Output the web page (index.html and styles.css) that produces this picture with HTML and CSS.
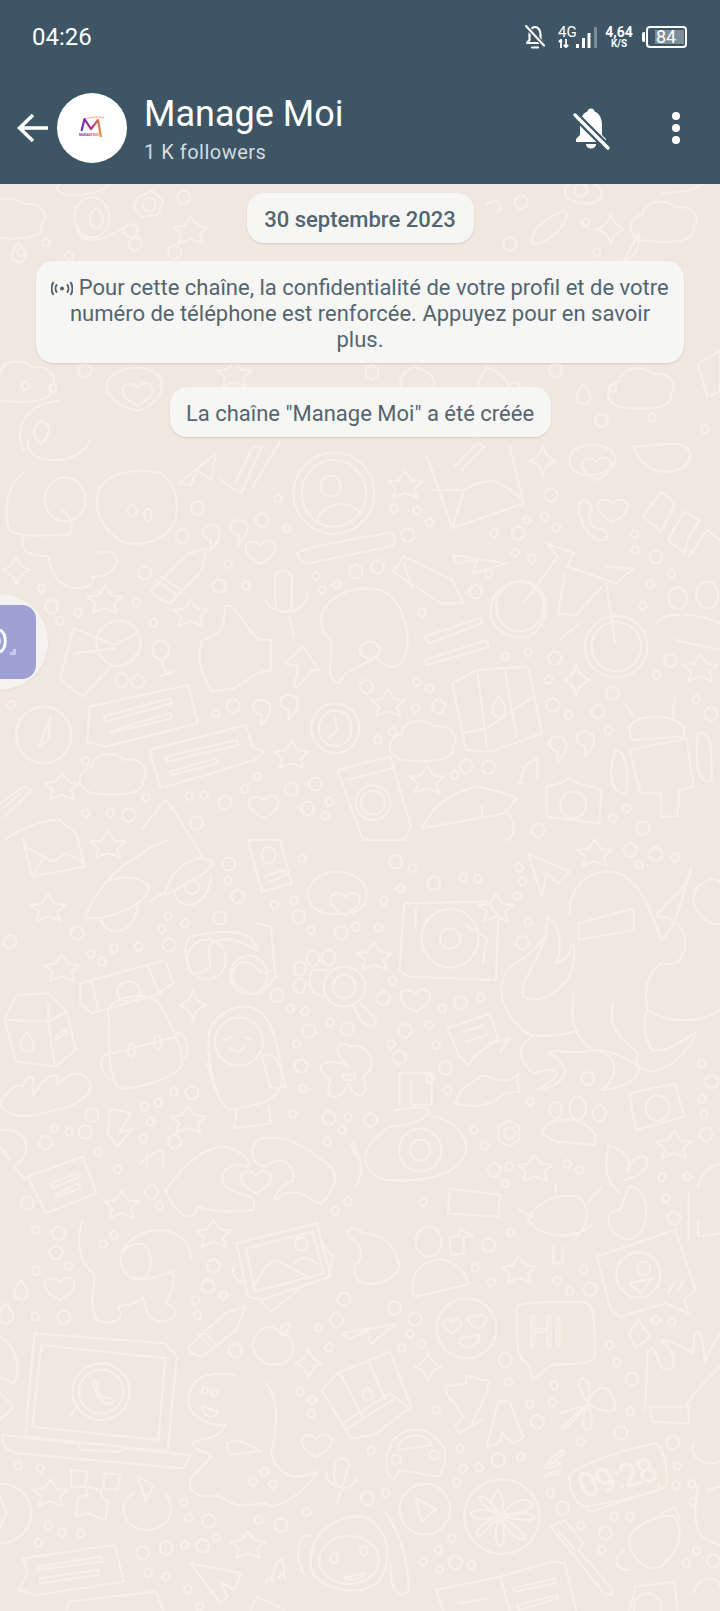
FILE: index.html
```html
<!DOCTYPE html>
<html lang="fr">

<head>
    <meta charset="UTF-8">
    <meta name="viewport" content="width=device-width, initial-scale=1.0">
    <link rel="stylesheet" href="styles.css">
    <title>Manage Moi</title>
</head>

<body>
    <div class="screen">
        <header class="top">
            <div class="status-bar">
                <span class="clock">04:26</span>
                <div class="status-icons">
                    <svg class="status-bell" viewBox="0 0 20 24" width="20" height="24">
                        <path d="M2 18 4.500 15V9.500C4.500 5 7 2 10 2S15.500 5 15.500 9.500V15L18 18Z" fill="none" stroke="#fff" stroke-width="2.200" stroke-linejoin="round"/>
                        <path d="M7 22.500H13" stroke="#fff" stroke-width="2.200" stroke-linecap="round"/>
                        <path d="M1 1 19 20.500" stroke="#3d5564" stroke-width="4.500"/>
                        <path d="M1 1 19 20.500" stroke="#fff" stroke-width="2.200" stroke-linecap="round"/>
                    </svg>
                    <div class="network">
                        <div class="net-type">
                            <span class="net-label">4G</span>
                            <svg viewBox="0 0 11 9" width="11" height="9">
                                <path d="M3 9V1M.800 3 3 .800 3.800 3M8 0V8M5.800 6 8 8.200 10.200 6" fill="none" stroke="#fff" stroke-width="1.800"/>
                            </svg>
                        </div>
                        <svg class="signal" viewBox="0 0 21 21" width="21" height="21">
                            <rect x="0" y="17" width="3" height="4" fill="#fff"/>
                            <rect x="6" y="11" width="3" height="10" fill="#fff"/>
                            <rect x="11.500" y="6" width="3" height="15" fill="#fff"/>
                            <rect x="18" y="0" width="3" height="21" fill="#7d8e99"/>
                        </svg>
                    </div>
                    <div class="speed">
                        <span class="speed-value">4,64</span>
                        <span class="speed-unit">K/S</span>
                    </div>
                    <div class="battery">
                        <span class="battery-nub"></span>
                        <div class="battery-box">
                            <span class="battery-level">84</span>
                        </div>
                    </div>
                </div>
            </div>
            <div class="app-bar">
                <svg class="back" viewBox="0 0 32 32" width="32" height="32">
                    <path d="M31 16H3M16 3 2.500 16 16 29" fill="none" stroke="#fff" stroke-width="3.600"/>
                </svg>
                <div class="avatar">
                    <svg viewBox="0 0 26 24" width="26" height="24">
                        <defs>
                            <linearGradient id="logo" x1="0" x2="1" y1="0" y2="0">
                                <stop offset="0" stop-color="#6a2bb8"/>
                                <stop offset=".45" stop-color="#a52a8f"/>
                                <stop offset="1" stop-color="#ef8a3c"/>
                            </linearGradient>
                        </defs>
                        <path d="M2.500 15 5.500 3 12 13 19 4 22 21" fill="none" stroke="url(#logo)" stroke-width="2.200" stroke-linejoin="round"/>
                        <path d="M7 3C13 1 20 0 25 2" fill="none" stroke="#ef8a3c" stroke-width=".7"/>
                        <text class="logo-text" x="0" y="20" fill="url(#logo)">MANAGE MOI</text>
                    </svg>
                </div>
                <div class="channel">
                    <h1 class="channel-name">Manage Moi</h1>
                    <span class="channel-count">1 K followers</span>
                </div>
                <svg class="muted" viewBox="0 0 40 44" width="40" height="44">
                    <circle cx="19" cy="4" r="3.500" fill="#fff"/>
                    <path d="M19 3C11 3 8 10 8 17V27L4 31V34H34V31L30 27V17C30 10 27 3 19 3Z" fill="#fff"/>
                    <path d="M14 36H24C24 42 14 42 14 36Z" fill="#fff"/>
                    <path d="M2 6 36 40" stroke="#3d5564" stroke-width="8"/>
                    <path d="M3 7 36 40" stroke="#fff" stroke-width="3.400" stroke-linecap="round"/>
                </svg>
                <div class="more">
                    <span class="dot"></span>
                    <span class="dot"></span>
                    <span class="dot"></span>
                </div>
            </div>
        </header>

        <main class="chat">
            <svg class="wallpaper" viewBox="0 184 720 1427" width="720" height="1427">
                <defs>
                    <ellipse id="o" rx="14" ry="20"/>
                    <ellipse id="s" rx="8" ry="12"/>
                    <path id="star" d="M0-42 14-14 38-10 20 10 26 38 0 24-26 38-20 10-38-10-14-14Z"/>
                    <path id="spark" d="M0-45Q5-10 30 0 5 10 0 45-5 10-30 0-5-10 0-45Z"/>
                    <path id="heart" d="M0 36C-50 0-35-40-8-28L0-18C10-45 40-30 30 0 25 15 10 28 0 36Z"/>
                    <path id="drop" d="M0-30C15-5 25 20 5 30-20 30-18 0 0-30Z"/>
                    <path id="cloud" d="M-50 60C-90 40-80-10-50-20-50-60 0-70 20-40 60-50 80 0 60 20 70 60 20 70-50 60Z"/>
                    <path id="plane" d="M-40 40 40-50 30 30 0 0-15 45Z"/>
                    <path id="quote" d="M-20-30C-45-30-45 10-20 15L-22 45C0 20 10-25-20-30ZM40-45C15-45 15-5 40 0L38 30C60 5 70-40 40-45Z"/>
                    <path id="phone" d="M-20-60C-40-50-30 20 10 60L30 60C40 40 20 20 5 25-10 0-10-20 0-30-5-50-10-60-20-60Z"/>
                </defs>

                <!-- top strip, behind the notices -->
                <g class="doodles" transform="translate(0 184) scale(.4592 .3333)">
                    <use href="#cloud" x="30" y="100"/>
                    <ellipse cx="200" cy="100" rx="38" ry="60"/>
                    <ellipse cx="210" cy="105" rx="14" ry="28"/>
                    <path d="M170 125C160 170 210 190 270 130M130 0C100 40 200 50 240 0"/>
                    <path d="M300 40 330 20 355 50 345 90 310 100 292 70Z"/>
                    <ellipse cx="325" cy="62" rx="15" ry="20"/>
                    <use href="#star" x="415" y="140"/>
                    <use href="#o" x="400" y="40"/>
                    <use href="#o" x="285" y="140"/>
                    <use href="#o" x="295" y="180"/>
                    <use href="#o" x="380" y="205"/>
                    <use href="#s" x="100" y="175"/>
                    <use href="#s" x="45" y="205"/>
                    <use href="#s" x="150" y="215"/>
                    <use href="#o" x="1135" y="55"/>
                    <path d="M1060 60C1080 40 1100 60 1085 85M1230 20C1230-20 1310-20 1310 30 1310 70 1230 70 1230 20Z"/>
                    <ellipse cx="1265" cy="18" rx="14" ry="20"/>
                    <path d="M1160 180C1150 140 1190 100 1230 80 1250 100 1200 180 1160 180Z"/>
                    <use href="#spark" x="1330" y="135"/>
                    <use href="#cloud" x="1450" y="110"/>
                    <path d="M1360 230C1375 180 1390 160 1390 150 1395 190 1380 225 1360 230ZM1440 30 1500 20 1530 0"/>
                    <use href="#o" x="1110" y="180"/>
                    <use href="#s" x="1275" y="115"/>
                    <use href="#s" x="1300" y="205"/>
                    <use href="#drop" x="40" y="205"/>
                    <use href="#cloud" x="50" y="590"/>
                    <use href="#o" x="185" y="560"/>
                    <use href="#s" x="55" y="605"/>
                    <use href="#s" x="115" y="612"/>
                    <path d="M300 550C200 560 220 660 300 680 360 660 380 560 300 550Z"/>
                    <use href="#heart" x="300" y="630"/>
                    <use href="#star" x="510" y="570"/>
                    <path d="M900 550C860 570 860 640 910 650 960 640 960 560 900 550ZM1060 550C1030 600 1030 680 1080 700 1120 680 1130 580 1060 550Z"/>
                    <use href="#o" x="810" y="565"/>
                    <use href="#o" x="1210" y="560"/>
                    <use href="#drop" x="1270" y="630"/>
                    <use href="#cloud" x="1400" y="610"/>
                    <use href="#s" x="1335" y="612"/>
                    <path d="M130 650C60 660 30 720 50 800M1520 540 1568 500V620L1540 640Z"/>
                    <path d="M85 710C70 740 70 760 90 780 110 750 115 720 85 710Z"/>
                    <use href="#o" x="1310" y="710"/>
                    <use href="#o" x="1040" y="740"/>
                    <use href="#s" x="1420" y="700"/>
                    <use href="#s" x="1535" y="735"/>
                    <use href="#o" x="1120" y="615"/>
                </g>

                <!-- middle band one -->
                <g class="doodles" transform="translate(0 440) scale(.4592 .3333)">
                    <path d="M50 100C20 130 5 200 20 270 50 300 120 280 150 285 165 250 150 220 135 210M50 290C45 340 60 345 105 350 110 400 130 445 170 445 210 440 205 420 200 410 250 410 270 360 240 335L215 335M60 0C60 60 100 60 120 60 160 60 190 30 195 0"/>
                    <ellipse cx="142" cy="178" rx="44" ry="66"/>
                    <path d="M215 150C230 100 300 80 350 100 385 130 395 210 375 260 350 310 280 330 250 290 215 250 205 200 215 150Z"/>
                    <ellipse cx="288" cy="212" rx="10" ry="17"/>
                    <ellipse cx="322" cy="225" rx="8" ry="18"/>
                    <use href="#plane" x="430" y="90"/>
                    <path d="M477 118 525 160 570 20 550 20 512 128M550 140 610 5"/>
                    <ellipse cx="727" cy="160" rx="88" ry="122"/>
                    <ellipse cx="727" cy="160" rx="70" ry="100"/>
                    <ellipse cx="720" cy="138" rx="22" ry="32"/>
                    <path d="M690 240C700 190 770 170 785 225"/>
                    <path d="M930 50 985 265 1140 190 1110 20M945 150 1010 150 985 265M1010 150C1060 110 1080 110 1140 180M990 80 1040 10 1055 20 1005 90"/>
                    <use href="#spark" x="1182" y="62"/>
                    <path d="M1240 60C1240 0 1340 0 1340 60 1340 110 1240 130 1240 60Z"/>
                    <use href="#heart" x="1300" y="85"/>
                    <path d="M1380 20C1400 100 1450 110 1490 80 1510 50 1510 20 1470 10Z"/>
                    <use href="#phone" transform="translate(1290 240)"/>
                    <use href="#heart" x="1335" y="210"/>
                    <path d="M1400 230 1440 155 1470 190 1440 275ZM1455 300 1490 215 1525 240 1500 290 1490 340ZM1500 350 1540 270 1568 300"/>
                    <use href="#quote" x="480" y="285"/>
                    <use href="#heart" x="568" y="335"/>
                    <path d="M650 345C640 335 650 325 850 278 865 290 860 315 850 320L670 370C655 370 650 360 650 345Z"/>
                    <use href="#plane" transform="translate(1040 360) rotate(60)"/>
                    <path d="M330 450 410 340 450 325 440 390 370 490C350 480 335 470 330 450ZM340 420 385 465M350 410 395 450"/>
                    <path d="M855 395 880 350 985 420 1010 490 960 490ZM880 370 895 440"/>
                    <path d="M600 400C620 380 640 400 635 420V500C635 520 605 520 600 500ZM578 480C590 530 670 530 670 455M630 530 640 590"/>
                    <path d="M700 540C700 480 760 430 830 450 880 480 900 600 880 650 870 700 830 680 820 650 780 690 750 680 740 730 700 720 730 640 720 600 700 580 700 560 700 540Z"/>
                    <ellipse cx="805" cy="630" rx="22" ry="25"/>
                    <path d="M440 600C470 590 490 580 490 500 510 480 530 560 565 600L590 600V690L560 700 510 745 460 755C440 700 425 660 440 600Z"/>
                    <path d="M660 620 695 690 680 690 650 740 640 740 650 680 620 670Z"/>
                    <path d="M1070 490C1080 440 1120 410 1160 430 1200 470 1200 550 1150 590 1100 600 1060 560 1070 490Z"/>
                    <ellipse cx="1132" cy="500" rx="52" ry="74"/>
                    <path d="M1140 490 1215 350 1190 310 1250 340 1235 380 1340 430 1380 385 1320 380M1230 400 1215 520 1255 525 1310 440M1320 430 1340 610M1260 550 1220 600"/>
                    <ellipse cx="1342" cy="620" rx="68" ry="92"/>
                    <ellipse cx="1342" cy="620" rx="54" ry="74"/>
                    <path d="M925 590 1045 535 1050 550 935 610ZM925 660 1060 600 1065 620 930 675Z"/>
                    <path d="M985 730 1040 690 1150 680 1180 880 1070 935 1015 930ZM1005 880 1060 865 1140 790 1165 770M1040 700 1060 920M1100 695 1125 890"/>
                    <use href="#drop" x="1085" y="800"/>
                    <path d="M1430 550C1440 520 1500 510 1568 550M1470 600 1568 630"/>
                    <ellipse cx="1476" cy="475" rx="20" ry="32"/>
                    <ellipse cx="1540" cy="465" rx="24" ry="40"/>
                    <path d="M160 565 250 615 300 580C320 620 290 680 240 680L180 770 130 720ZM165 640 250 625"/>
                    <ellipse cx="258" cy="610" rx="48" ry="68"/>
                    <ellipse cx="350" cy="630" rx="18" ry="28"/>
                    <path d="M352 660 360 695M350 708 380 695"/>
                    <ellipse cx="95" cy="885" rx="60" ry="85"/>
                    <path d="M110 830 85 920 105 900Z"/>
                    <path d="M195 800 410 735 430 850 230 920 190 905ZM225 830 370 775 375 790 230 845ZM240 875 370 820 375 835 240 880Z"/>
                    <path d="M325 930 535 855 550 920 575 935 555 960 350 1045ZM360 950 515 900 520 915 365 965ZM370 995 470 955 475 970 375 1005Z"/>
                    <use href="#quote" x="590" y="810"/>
                    <ellipse cx="730" cy="865" rx="52" ry="75"/>
                    <ellipse cx="730" cy="865" rx="36" ry="54"/>
                    <path d="M728 830 735 870 715 895"/>
                    <use href="#cloud" x="925" y="900"/>
                    <use href="#quote" x="1235" y="920"/>
                    <path d="M1370 930 1495 895 1510 1040 1480 1050 1475 1130H1440V1060L1395 1060ZM1340 930C1370 930 1370 1060 1360 1060 1330 1060 1325 1000 1340 930ZM1370 860C1390 820 1460 820 1490 860V890L1375 900ZM1360 790 1380 830M1470 770 1465 825"/>
                    <path d="M1520 880C1545 870 1550 900 1550 1020 1530 1040 1510 1000 1520 880Z"/>
                    <use href="#cloud" x="250" y="1000"/>
                    <path d="M735 990 850 950 895 1160 880 1200H790ZM755 1020 855 985"/>
                    <ellipse cx="812" cy="1088" rx="38" ry="52"/>
                    <ellipse cx="812" cy="1088" rx="26" ry="36"/>
                    <path d="M920 1160C950 1080 1000 1050 1040 1040 1070 1050 1110 1060 1125 1075L1100 1120 920 1165ZM1050 1100V1130M1100 1110C1130 1150 1120 1200 1100 1200"/>
                    <path d="M1140 1030 1130 1030 1145 975 1170 955V1020"/>
                    <path d="M1190 1040 1220 1030 1240 1015 1260 1030 1310 1050 1305 1150 1190 1130Z"/>
                    <ellipse cx="1248" cy="1095" rx="28" ry="40"/>
                    <path d="M0 1090 50 1040 70 1050 10 1130M10 1100 45 1060"/>
                    <path d="M310 1165 360 1080C390 1120 400 1170 420 1200"/>
                    <path d="M10 1200C50 1160 100 1140 130 1140 140 1160 170 1170 170 1200"/>
                    <use href="#heart" x="575" y="1100"/>
                    <use href="#star" x="228" y="480"/>
                    <use href="#star" x="415" y="520"/>
                    <use href="#star" x="882" y="135"/>
                    <use href="#star" x="845" y="790"/>
                    <use href="#star" x="635" y="945"/>
                    <use href="#star" x="135" y="1040"/>
                    <use href="#star" x="930" y="1020"/>
                    <use href="#star" x="1525" y="685"/>
                    <use href="#spark" x="35" y="390"/>
                    <use href="#spark" x="1255" y="720"/>
                    <use href="#o" x="430" y="205"/>
                    <use href="#o" x="570" y="240"/>
                    <use href="#s" x="605" y="175"/>
                    <use href="#s" x="625" y="265"/>
                    <use href="#o" x="397" y="288"/>
                    <use href="#o" x="315" y="398"/>
                    <use href="#o" x="477" y="438"/>
                    <use href="#s" x="497" y="372"/>
                    <use href="#s" x="536" y="437"/>
                    <use href="#o" x="112" y="500"/>
                    <use href="#s" x="170" y="518"/>
                    <use href="#s" x="90" y="445"/>
                    <use href="#s" x="130" y="542"/>
                    <use href="#s" x="297" y="487"/>
                    <use href="#s" x="334" y="548"/>
                    <use href="#o" x="265" y="720"/>
                    <use href="#o" x="300" y="725"/>
                    <use href="#o" x="508" y="798"/>
                    <use href="#s" x="470" y="820"/>
                    <use href="#o" x="798" y="740"/>
                    <use href="#o" x="955" y="800"/>
                    <use href="#s" x="905" y="805"/>
                    <use href="#s" x="935" y="745"/>
                    <use href="#s" x="908" y="725"/>
                    <use href="#s" x="822" y="900"/>
                    <use href="#s" x="855" y="875"/>
                    <use href="#o" x="775" y="395"/>
                    <use href="#o" x="822" y="380"/>
                    <use href="#s" x="687" y="408"/>
                    <use href="#s" x="702" y="450"/>
                    <use href="#s" x="733" y="433"/>
                    <use href="#o" x="888" y="285"/>
                    <use href="#s" x="858" y="205"/>
                    <use href="#s" x="908" y="212"/>
                    <use href="#s" x="935" y="247"/>
                    <use href="#o" x="1128" y="280"/>
                    <use href="#s" x="1076" y="280"/>
                    <use href="#s" x="1122" y="338"/>
                    <use href="#s" x="1158" y="355"/>
                    <use href="#o" x="1036" y="455"/>
                    <use href="#s" x="1065" y="402"/>
                    <use href="#s" x="918" y="518"/>
                    <use href="#o" x="1200" y="165"/>
                    <use href="#s" x="1148" y="240"/>
                    <use href="#s" x="1186" y="230"/>
                    <use href="#s" x="1212" y="262"/>
                    <use href="#o" x="1428" y="350"/>
                    <use href="#s" x="1382" y="282"/>
                    <use href="#s" x="1383" y="330"/>
                    <use href="#s" x="1416" y="432"/>
                    <use href="#s" x="1400" y="497"/>
                    <use href="#s" x="1462" y="402"/>
                    <use href="#s" x="1100" y="650"/>
                    <use href="#o" x="1208" y="655"/>
                    <use href="#s" x="1150" y="637"/>
                    <use href="#o" x="1460" y="662"/>
                    <use href="#o" x="1203" y="795"/>
                    <use href="#s" x="1238" y="825"/>
                    <use href="#o" x="1302" y="815"/>
                    <use href="#o" x="1334" y="760"/>
                    <use href="#s" x="1195" y="718"/>
                    <use href="#s" x="1430" y="705"/>
                    <use href="#s" x="1516" y="778"/>
                    <use href="#o" x="1548" y="822"/>
                    <use href="#s" x="1325" y="870"/>
                    <use href="#s" x="24" y="795"/>
                    <use href="#s" x="186" y="963"/>
                    <use href="#o" x="1015" y="978"/>
                    <use href="#o" x="1063" y="982"/>
                    <use href="#s" x="990" y="1005"/>
                    <use href="#o" x="687" y="1032"/>
                    <use href="#o" x="634" y="1048"/>
                    <use href="#s" x="560" y="1010"/>
                    <use href="#s" x="533" y="1047"/>
                    <use href="#o" x="490" y="1088"/>
                    <use href="#s" x="412" y="1068"/>
                    <use href="#s" x="445" y="1065"/>
                    <use href="#s" x="318" y="1073"/>
                    <use href="#s" x="186" y="1120"/>
                    <use href="#s" x="240" y="1120"/>
                    <use href="#o" x="280" y="1125"/>
                    <use href="#o" x="428" y="1150"/>
                    <use href="#o" x="670" y="1105"/>
                    <use href="#s" x="717" y="1085"/>
                    <use href="#s" x="708" y="1128"/>
                    <use href="#s" x="1334" y="1135"/>
                    <use href="#s" x="1365" y="1105"/>
                    <use href="#o" x="1400" y="1165"/>
                    <use href="#o" x="1172" y="1170"/>
                </g>

                <!-- middle band two -->
                <g class="doodles" transform="translate(0 840) scale(.4592 .3333)">
                    <path d="M50 0 70 110 185 80 170 0M55 20 115 65 145 40 185 70M70 110 95 55"/>
                    <path d="M185 235C200 170 250 80 300 50 320 20 350 10 365 0M185 235C250 240 320 190 325 140 300 100 250 110 225 130M220 240C230 290 290 290 300 200"/>
                    <path d="M360 160C370 90 420 40 460 60 470 80 450 100 360 165ZM380 150C380 210 450 220 460 110"/>
                    <ellipse cx="418" cy="142" rx="15" ry="20"/>
                    <path d="M325 185 360 155M420 0 440 50"/>
                    <path d="M540 0 570 155 635 130 610 0ZM575 110 620 90 625 105 585 125"/>
                    <ellipse cx="585" cy="45" rx="15" ry="25"/>
                    <path d="M670 170C670 100 740 70 785 120 810 160 800 210 760 220 720 225 680 225 670 170Z"/>
                    <use href="#heart" x="752" y="190"/>
                    <path d="M880 190 1060 185 1085 230 1080 420 890 410 870 390Z"/>
                    <ellipse cx="980" cy="295" rx="62" ry="88"/>
                    <ellipse cx="980" cy="295" rx="22" ry="30"/>
                    <path d="M1015 255 1060 295 1052 370M905 205V265"/>
                    <path d="M1150 40 1240 95 1215 130 1190 100 1180 170Z"/>
                    <path d="M1240 220C1240 140 1280 90 1330 95 1390 100 1420 220 1440 300 1480 260 1490 130 1505 90 1500 150 1440 190 1430 230 1510 220 1510 400 1440 370M1260 250 1380 205 1380 270 1260 300ZM1190 230C1230 260 1220 350 1210 370 1250 360 1240 300 1250 320 1260 440 1180 500 1140 470 1130 420 1170 380 1190 280Z"/>
                    <path d="M1250 460C1240 540 1250 590 1290 630 1340 630 1370 660 1390 680 1400 720 1340 750 1310 750 1350 710 1350 640 1290 630 1240 650 1210 620 1195 640 1240 670 1250 730 1170 750 1220 710 1240 670 1160 700 1130 660 1120 620 1160 590 1100 540 1070 450 1110 380 1120 370 1150 360 1190 280M1160 585C1190 590 1220 585 1250 575"/>
                    <path d="M1335 490C1320 570 1360 600 1390 640 1380 670 1390 690 1420 695 1480 680 1510 600 1515 580 1480 600 1460 640 1420 630 1400 590 1400 530 1410 510 1450 550 1530 550 1568 510M1410 510C1400 450 1410 400 1440 370"/>
                    <path d="M1510 170C1520 110 1568 110 1568 130M1510 180C1515 230 1550 260 1568 250"/>
                    <path d="M415 290C480 270 550 260 560 330 530 310 500 280 460 310 440 340 490 400 415 400 400 350 400 310 415 290ZM560 250 590 260 600 410 570 460C540 470 500 430 505 400 515 360 540 350 570 400L600 390"/>
                    <ellipse cx="450" cy="358" rx="42" ry="60"/>
                    <ellipse cx="542" cy="405" rx="40" ry="58"/>
                    <path d="M175 430 360 360 378 430 340 465 200 520 175 490ZM200 425 215 515M320 375 350 465"/>
                    <ellipse cx="280" cy="455" rx="25" ry="30"/>
                    <path d="M235 510C245 470 320 450 345 490 380 560 400 640 395 680 370 720 290 750 260 745 230 700 240 600 235 510ZM245 640 385 590M240 640C210 640 215 710 250 725M380 580C410 570 415 650 400 660"/>
                    <ellipse cx="286" cy="630" rx="8" ry="20"/>
                    <ellipse cx="343" cy="608" rx="8" ry="20"/>
                    <path d="M10 540 35 465 105 460 145 515 165 630 120 680 35 665ZM10 540 105 545 120 680M105 490 105 545 145 515M120 590 145 565 145 580 122 598"/>
                    <use href="#drop" x="58" y="605"/>
                    <path d="M455 600C450 540 500 495 540 500 590 510 605 600 615 720 610 770 590 790 500 810 470 790 450 660 455 600Z"/>
                    <ellipse cx="520" cy="605" rx="52" ry="72"/>
                    <path d="M490 600 505 590M535 590 550 600M500 620C510 640 530 640 530 620M570 650C590 630 610 650 622 740L590 745ZM450 670 470 755M515 810 510 865 590 850 585 800"/>
                    <path d="M760 680C710 620 750 600 760 620 800 600 830 680 790 710 810 780 770 780 760 730 740 790 700 780 720 720 680 690 700 640 760 680Z"/>
                    <path d="M745 705 775 700 770 720 750 720Z"/>
                    <ellipse cx="750" cy="440" rx="45" ry="60"/>
                    <ellipse cx="750" cy="440" rx="25" ry="35"/>
                    <path d="M675 390 715 390M680 390C665 440 680 470 710 470M785 490 820 540 815 560 790 550 770 500"/>
                    <ellipse cx="682" cy="355" rx="14" ry="24"/>
                    <ellipse cx="715" cy="352" rx="14" ry="24"/>
                    <ellipse cx="653" cy="385" rx="13" ry="22"/>
                    <ellipse cx="652" cy="438" rx="13" ry="22"/>
                    <path d="M975 565 1068 520 1085 600 1040 640 1020 675 1000 650Z"/>
                    <path d="M1010 575 1055 555M1015 605 1060 585M1065 610 1110 595 1090 635"/>
                    <path d="M990 790C1000 740 1040 720 1050 705 1090 725 1110 730 1130 700 1120 730 1135 745 1130 755L1095 760C1080 790 1040 810 990 790Z"/>
                    <path d="M0 790C20 740 40 730 50 740 60 700 80 690 70 770 100 710 110 700 125 710 120 770 130 700 170 700 220 720 200 790 120 810 50 840 10 830 0 790Z"/>
                    <path d="M240 805 285 820 260 880 290 865 255 920 235 880Z"/>
                    <use href="#star" x="410" y="840"/>
                    <path d="M305 970 340 935 355 935V980M320 940 320 980"/>
                    <path d="M895 720V795H940V700H870V795M860 810C980 780 940 850 850 860 790 910 770 990 840 1020 930 1030 1020 1000 1015 910 1000 850 960 830 940 830"/>
                    <ellipse cx="915" cy="930" rx="46" ry="64"/>
                    <ellipse cx="915" cy="930" rx="22" ry="32"/>
                    <path d="M785 965C770 940 760 910 770 910 775 930 785 950 785 965 790 1000 780 1030 775 1040"/>
                    <path d="M1110 840 1130 860V900L1110 920 1085 900V860Z"/>
                    <ellipse cx="1110" cy="880" rx="12" ry="18"/>
                    <path d="M1180 880C1190 840 1220 830 1260 845 1300 870 1300 890 1295 915L1210 905Z"/>
                    <ellipse cx="1210" cy="810" rx="14" ry="24"/>
                    <ellipse cx="1258" cy="805" rx="18" ry="35"/>
                    <ellipse cx="1305" cy="820" rx="14" ry="24"/>
                    <path d="M1370 760 1420 745 1470 730 1490 830 1385 870Z"/>
                    <ellipse cx="1432" cy="805" rx="26" ry="38"/>
                    <path d="M360 1050C400 980 440 920 490 920 520 930 550 960 540 980 500 960 470 1000 490 1040 520 1070 570 1060 550 1110 490 1120 450 1110 430 1100 420 1160 380 1120 360 1050ZM560 900C600 880 650 900 700 960 740 990 740 1030 700 1090 670 1090 680 1050 620 1060 580 1110 600 1040 640 1020 640 970 610 940 580 980 550 980 540 930 560 900Z"/>
                    <use href="#heart" x="558" y="1025"/>
                    <path d="M60 1010 180 950 210 1060 100 1120ZM110 1030 170 1000 175 1010 115 1045ZM120 1065 170 1030 175 1045 125 1070Z"/>
                    <path d="M0 870C70 860 70 950 30 980L55 1020M0 920 20 960"/>
                    <use href="#star" x="265" y="1095"/>
                    <path d="M980 1045 1090 1065 1085 1130 975 1120Z"/>
                    <path d="M1150 1150C1160 1080 1220 1060 1260 1070 1290 1110 1280 1160 1250 1200M1210 1060V1030M1280 1090 1310 1040M1130 1110 1160 1130"/>
                    <path d="M1350 1110C1310 1110 1320 1190 1370 1200 1420 1180 1420 1040 1370 1040ZM1350 1060C1310 1010 1320 960 1325 915 1360 930 1380 960 1365 1000M1360 1020C1400 1010 1420 970 1405 950 1390 945 1370 960 1365 1000"/>
                    <path d="M1520 1040C1530 980 1568 970 1568 970M1500 1060V1200"/>
                    <use href="#star" x="105" y="205"/>
                    <use href="#star" x="135" y="385"/>
                    <use href="#star" x="815" y="350"/>
                    <use href="#star" x="1080" y="205"/>
                    <use href="#star" x="1295" y="40"/>
                    <use href="#star" x="1165" y="985"/>
                    <use href="#star" x="1468" y="915"/>
                    <use href="#star" x="235" y="15"/>
                    <use href="#spark" x="420" y="495"/>
                    <use href="#heart" x="905" y="480"/>
                    <use href="#o" x="168" y="280"/>
                    <use href="#o" x="22" y="305"/>
                    <use href="#s" x="198" y="342"/>
                    <use href="#s" x="222" y="365"/>
                    <use href="#s" x="248" y="325"/>
                    <use href="#s" x="302" y="320"/>
                    <use href="#o" x="368" y="315"/>
                    <use href="#s" x="352" y="267"/>
                    <use href="#s" x="403" y="250"/>
                    <use href="#s" x="366" y="228"/>
                    <use href="#o" x="478" y="234"/>
                    <use href="#o" x="518" y="170"/>
                    <use href="#o" x="498" y="72"/>
                    <use href="#s" x="497" y="122"/>
                    <use href="#s" x="598" y="195"/>
                    <use href="#s" x="640" y="182"/>
                    <use href="#o" x="650" y="230"/>
                    <use href="#s" x="677" y="270"/>
                    <use href="#o" x="743" y="278"/>
                    <use href="#s" x="775" y="260"/>
                    <use href="#s" x="825" y="262"/>
                    <use href="#s" x="836" y="182"/>
                    <use href="#o" x="945" y="130"/>
                    <use href="#s" x="1008" y="112"/>
                    <use href="#s" x="1040" y="116"/>
                    <use href="#o" x="862" y="65"/>
                    <use href="#s" x="898" y="84"/>
                    <use href="#s" x="872" y="145"/>
                    <use href="#s" x="658" y="55"/>
                    <use href="#o" x="1428" y="42"/>
                    <use href="#o" x="1372" y="30"/>
                    <use href="#s" x="1470" y="52"/>
                    <use href="#s" x="1392" y="75"/>
                    <use href="#o" x="1138" y="308"/>
                    <use href="#s" x="1150" y="245"/>
                    <use href="#s" x="1130" y="82"/>
                    <use href="#s" x="1138" y="124"/>
                    <use href="#s" x="1126" y="168"/>
                    <use href="#o" x="603" y="466"/>
                    <use href="#s" x="632" y="505"/>
                    <use href="#s" x="664" y="514"/>
                    <use href="#o" x="673" y="573"/>
                    <use href="#s" x="646" y="612"/>
                    <use href="#s" x="719" y="547"/>
                    <use href="#o" x="756" y="567"/>
                    <use href="#o" x="656" y="678"/>
                    <use href="#s" x="660" y="746"/>
                    <use href="#s" x="855" y="422"/>
                    <use href="#o" x="835" y="475"/>
                    <use href="#s" x="963" y="505"/>
                    <use href="#o" x="1003" y="488"/>
                    <use href="#s" x="1047" y="472"/>
                    <use href="#o" x="882" y="572"/>
                    <use href="#s" x="934" y="555"/>
                    <use href="#s" x="851" y="613"/>
                    <use href="#s" x="950" y="615"/>
                    <use href="#o" x="870" y="653"/>
                    <use href="#o" x="970" y="683"/>
                    <use href="#s" x="936" y="718"/>
                    <use href="#s" x="975" y="750"/>
                    <use href="#o" x="1280" y="716"/>
                    <use href="#o" x="200" y="826"/>
                    <use href="#s" x="315" y="800"/>
                    <use href="#s" x="345" y="788"/>
                    <use href="#s" x="328" y="845"/>
                    <use href="#s" x="312" y="896"/>
                    <use href="#o" x="380" y="905"/>
                    <use href="#s" x="378" y="755"/>
                    <use href="#o" x="418" y="758"/>
                    <use href="#o" x="185" y="876"/>
                    <use href="#s" x="151" y="875"/>
                    <use href="#s" x="119" y="865"/>
                    <use href="#o" x="99" y="908"/>
                    <use href="#s" x="213" y="936"/>
                    <use href="#s" x="256" y="988"/>
                    <use href="#o" x="330" y="1056"/>
                    <use href="#s" x="347" y="1098"/>
                    <use href="#o" x="60" y="1090"/>
                    <use href="#o" x="716" y="834"/>
                    <use href="#s" x="758" y="832"/>
                    <use href="#o" x="807" y="840"/>
                    <use href="#s" x="745" y="870"/>
                    <use href="#s" x="638" y="822"/>
                    <use href="#s" x="712" y="905"/>
                    <use href="#s" x="1155" y="785"/>
                    <use href="#o" x="1076" y="990"/>
                    <use href="#s" x="1109" y="980"/>
                    <use href="#s" x="1100" y="1030"/>
                    <use href="#s" x="1235" y="972"/>
                    <use href="#s" x="1262" y="990"/>
                    <use href="#s" x="1032" y="870"/>
                    <use href="#s" x="1056" y="917"/>
                    <use href="#s" x="922" y="1085"/>
                    <use href="#s" x="758" y="1085"/>
                    <use href="#s" x="730" y="1113"/>
                    <use href="#o" x="1550" y="725"/>
                    <use href="#s" x="1528" y="670"/>
                    <use href="#s" x="1528" y="776"/>
                    <use href="#s" x="1533" y="822"/>
                    <use href="#o" x="1538" y="883"/>
                    <use href="#s" x="1442" y="1012"/>
                    <use href="#s" x="1497" y="1010"/>
                    <use href="#s" x="1450" y="1075"/>
                    <use href="#o" x="1468" y="1135"/>
                </g>

                <!-- bottom band -->
                <g class="doodles" transform="translate(0 1220) scale(.4592 .3333)">
                    <path d="M180 0C165 60 170 130 205 160 210 200 190 230 210 300 240 320 280 300 255 260 300 250 310 240 310 230 320 270 320 300 350 305 390 300 390 260 360 250 380 200 380 170 375 155 340 170 300 190 280 170 250 130 260 70 310 40 370 10 420 60 415 120 400 150 375 155"/>
                    <path d="M265 100C290 60 320 60 325 100 335 150 320 190 290 170"/>
                    <path d="M515 70 690 10 720 170 570 240 540 230ZM535 85 680 35 705 160 555 215ZM555 195C570 150 590 120 600 120L670 170M640 130C650 110 670 110 690 130"/>
                    <ellipse cx="656" cy="72" rx="14" ry="20"/>
                    <path d="M565 240 590 275 650 210M510 140C500 160 515 180 530 190M700 70 725 110 715 170"/>
                    <path d="M780 130C800 70 760 50 760 50 750 30 770 10 790 40 830 40 860 70 870 140 860 190 790 210 775 170 770 150 770 130 780 130Z"/>
                    <ellipse cx="933" cy="65" rx="28" ry="45"/>
                    <path d="M900 225C890 170 920 120 935 130 950 100 1010 130 1020 190L1015 195 905 230Z"/>
                    <path d="M980 90V50H1000V25L1030 50H1010V100L985 105Z"/>
                    <use href="#star" x="1130" y="150"/>
                    <path d="M1150 0C1180 60 1260 60 1290 10M1205 80V130H1225V80"/>
                    <path d="M1300 110 1470 30 1515 210 1490 240 1500 280 1450 250 1350 290 1330 270Z"/>
                    <ellipse cx="1390" cy="165" rx="48" ry="68"/>
                    <ellipse cx="1402" cy="145" rx="14" ry="20"/>
                    <path d="M1370 190 1420 175 1395 220ZM1455 220 1470 185M1475 215 1490 180"/>
                    <path d="M1520 0 1520 50 1568 40"/>
                    <use href="#drop" x="45" y="210"/>
                    <use href="#heart" x="130" y="205"/>
                    <use href="#drop" x="12" y="280"/>
                    <path d="M410 380 490 280 535 260 515 330 440 410 415 400ZM430 340 465 390M440 330 470 375"/>
                    <path d="M550 380C550 330 590 300 610 340 640 340 650 400 620 430 590 440 570 430 560 410ZM610 340C610 320 620 310 630 310 630 330 620 350 610 340Z"/>
                    <use href="#plane" transform="translate(800 330) rotate(35)"/>
                    <ellipse cx="1016" cy="325" rx="65" ry="90"/>
                    <use href="#heart" transform="translate(985 318) scale(.6)"/>
                    <use href="#heart" transform="translate(1040 305) scale(.6)"/>
                    <path d="M1000 355 1045 345C1040 395 1000 390 1000 355Z"/>
                    <path d="M1125 270C1125 250 1140 245 1270 245 1295 255 1295 280 1295 410 1290 430 1270 430 1200 435L1160 480 1150 430C1130 420 1125 400 1125 270Z"/>
                    <text class="wall-hi" x="1150" y="378" textLength="75" lengthAdjust="spacingAndGlyphs">Hi</text>
                    <path d="M1370 340 1390 300 1415 350 1385 385Z"/>
                    <path d="M1405 570 1410 400C1420 370 1430 400 1440 440 1460 470 1490 420 1440 360 1470 360 1510 400 1510 400 1510 310 1530 310 1535 430 1540 400 1568 340 1568 340M1415 560 1500 560 1500 610 1420 605ZM1495 555C1520 500 1540 480 1568 440M1510 670C1500 720 1540 740 1568 725"/>
                    <path d="M75 340 360 370 385 410 365 695 55 650 75 340ZM90 375 360 415 345 660 70 620 90 375ZM5 645 170 670 175 690 260 695 270 685 415 705 400 745 40 700C10 690 5 680 5 645Z"/>
                    <ellipse cx="220" cy="515" rx="62" ry="85"/>
                    <ellipse cx="220" cy="515" rx="48" ry="66"/>
                    <path d="M155 585 170 550M205 480C200 510 220 560 245 550 250 530 230 530 225 535 210 520 210 500 215 490Z"/>
                    <path d="M0 350C30 370 50 440 30 490L0 470M0 520 30 560 0 600"/>
                    <path d="M515 465C440 450 410 480 410 550 420 610 480 620 490 615 480 660 440 650 420 670 420 700 460 690 460 710 420 770 410 770 415 810 450 850 470 810 490 840 540 880 570 830 590 860 640 850 690 770 690 755 650 780 610 780 590 700 610 600 600 520 580 490 515 465ZM515 465 540 430 555 470 580 490 600 490"/>
                    <path d="M440 560 475 575C470 600 440 590 440 560ZM495 670C520 650 550 680 570 695 540 690 500 720 495 690Z"/>
                    <ellipse cx="446" cy="512" rx="7" ry="10"/>
                    <ellipse cx="467" cy="520" rx="7" ry="10"/>
                    <path d="M700 510 735 460 850 395 895 560 815 645 765 655ZM745 610 850 520 895 570M740 460 790 590M805 430 840 540M750 630 855 540"/>
                    <use href="#drop" transform="translate(800 520) scale(.7)"/>
                    <use href="#spark" x="672" y="430"/>
                    <use href="#spark" x="932" y="440"/>
                    <use href="#heart" x="690" y="675"/>
                    <path d="M970 500 1015 490 1015 465 1050 480 1065 480 1060 520 1025 620 1050 600 1000 640 990 620 1010 590 975 525ZM1060 680 1085 545H1110L1140 655 1115 670 1095 640 1085 670Z"/>
                    <path d="M1280 550C1230 450 1300 450 1280 550 1310 460 1340 520 1340 570 1310 580 1290 560 1280 550 1300 630 1280 640 1270 620 1265 600 1280 550 1280 550 1230 640 1220 630 1225 620 1280 550 1280 550 1220 580 1220 520 1250 515"/>
                    <path d="M850 680C860 630 920 600 960 670 980 700 960 760 960 760L955 770 870 750 860 775C840 780 835 720 850 680ZM865 690 940 675C925 630 870 640 865 690Z"/>
                    <ellipse cx="863" cy="718" rx="10" ry="14"/>
                    <ellipse cx="945" cy="705" rx="10" ry="14"/>
                    <path d="M730 730C745 700 765 720 760 740L745 800C725 800 725 760 730 730ZM710 760C715 810 770 820 775 775M740 815 735 850"/>
                    <path d="M155 750 190 755 185 800 155 800ZM228 760 262 762 255 810 225 805ZM190 800 220 810V835L235 840 230 900 190 880 165 890 170 830 190 825Z"/>
                    <use href="#star" x="110" y="820"/>
                    <path d="M290 820C250 850 270 930 320 930 380 920 380 860 360 820M300 770 335 795 318 845Z"/>
                    <ellipse cx="0" cy="880" rx="68" ry="90"/>
                    <path d="M0 830 15 880 0 920"/>
                    <ellipse cx="925" cy="868" rx="55" ry="76"/>
                    <path d="M905 835 950 868 918 905Z"/>
                    <ellipse cx="1093" cy="890" rx="82" ry="112"/>
                    <path d="M1090 890C1060 850 1070 830 1085 810 1095 830 1100 860 1090 890ZM1090 890C1140 880 1160 870 1160 850 1130 820 1110 860 1090 890ZM1090 890C1140 900 1160 910 1165 890 1140 870 1110 880 1090 890ZM1090 890C1130 920 1150 950 1140 960 1110 950 1100 920 1090 890ZM1090 890C1100 930 1100 970 1090 980 1070 960 1080 920 1090 890ZM1090 890C1060 920 1050 950 1040 950 1030 930 1060 900 1090 890ZM1090 890C1050 900 1030 900 1025 880 1050 860 1070 870 1090 890ZM1090 890C1060 860 1040 850 1045 830 1060 830 1080 860 1090 890Z"/>
                    <path d="M1240 770C1240 740 1380 680 1430 670 1450 700 1455 760 1450 800 1400 830 1320 850 1270 860 1250 840 1240 810 1240 770ZM1285 875 1435 810 1435 790M1285 875 1270 855"/>
                    <text class="wall-clock" x="1258" y="805" textLength="172" lengthAdjust="spacingAndGlyphs" transform="rotate(-18 1345 770)">09:28</text>
                    <path d="M1195 720 1225 690 1230 700 1195 735ZM1185 735 1220 725V735L1190 745ZM1185 765 1220 750V760L1190 772Z"/>
                    <path d="M1200 920 1230 900 1270 970 1260 990 1335 1110 1330 1125 1315 1120ZM1215 930 1250 985"/>
                    <path d="M1370 960C1380 910 1440 880 1470 890 1490 950 1480 990 1440 1040 1400 1060 1370 1000 1370 960ZM1440 880 1470 860 1480 900M1360 990C1330 1010 1340 1050 1370 1050"/>
                    <path d="M1520 800C1510 870 1510 940 1540 960L1568 975M1568 800 1540 810"/>
                    <path d="M50 1015 250 975 270 1085 80 1125 40 1110 60 1060ZM80 1040 220 1010 222 1025 80 1050ZM85 1075 215 1050 215 1065 88 1090Z"/>
                    <use href="#star" x="540" y="975"/>
                    <path d="M415 1030 525 1060 510 1110 480 1085 495 1130 480 1150Z"/>
                    <path d="M590 1085 600 1035 615 1015 620 1070M580 1090C575 1070 600 1070 595 1085M610 1080C600 1060 625 1055 620 1075"/>
                    <path d="M680 1060C660 950 730 880 790 890 850 920 860 1030 820 1090 780 1130 710 1110 680 1060ZM680 950C650 930 640 1000 660 1060M840 880C880 950 890 1060 890 1110 870 1140 850 1120 850 1030"/>
                    <ellipse cx="760" cy="1020" rx="65" ry="72"/>
                    <path d="M750 1075C765 1085 785 1080 795 1060L750 1072"/>
                    <ellipse cx="728" cy="1015" rx="8" ry="14"/>
                    <ellipse cx="792" cy="992" rx="8" ry="14"/>
                    <path d="M950 1110 1090 1070 1200 1025 1230 1030 1255 1173M950 1110 965 1173M1090 1070 1110 1173M1115 1105 1210 1075V1090L1120 1115ZM1125 1155 1215 1125V1135L1130 1170ZM1000 1150 1060 1135"/>
                    <path d="M145 1173 150 1145 340 1115 355 1173M545 1173 560 1130 620 1170"/>
                    <ellipse cx="1410" cy="1160" rx="30" ry="40"/>
                    <path d="M1370 1173 1385 1100 1470 1085 1475 1173"/>
                    <path d="M1510 1120C1520 1060 1568 1070 1568 1100"/>
                    <use href="#star" x="465" y="42"/>
                    <use href="#o" x="122" y="98"/>
                    <use href="#o" x="128" y="40"/>
                    <use href="#s" x="78" y="30"/>
                    <use href="#s" x="78" y="152"/>
                    <use href="#s" x="150" y="138"/>
                    <use href="#s" x="224" y="72"/>
                    <use href="#s" x="248" y="45"/>
                    <use href="#s" x="77" y="290"/>
                    <use href="#o" x="139" y="292"/>
                    <use href="#o" x="465" y="138"/>
                    <use href="#o" x="453" y="198"/>
                    <use href="#s" x="487" y="226"/>
                    <use href="#s" x="426" y="240"/>
                    <use href="#s" x="430" y="286"/>
                    <use href="#o" x="749" y="238"/>
                    <use href="#o" x="733" y="300"/>
                    <use href="#s" x="694" y="322"/>
                    <use href="#s" x="717" y="382"/>
                    <use href="#o" x="859" y="265"/>
                    <use href="#o" x="904" y="298"/>
                    <use href="#s" x="893" y="342"/>
                    <use href="#s" x="875" y="384"/>
                    <use href="#s" x="918" y="372"/>
                    <use href="#o" x="512" y="392"/>
                    <use href="#o" x="1064" y="75"/>
                    <use href="#s" x="1112" y="38"/>
                    <use href="#s" x="1035" y="143"/>
                    <use href="#s" x="1070" y="187"/>
                    <use href="#s" x="1213" y="182"/>
                    <use href="#s" x="1240" y="212"/>
                    <use href="#o" x="1285" y="208"/>
                    <use href="#s" x="1271" y="150"/>
                    <use href="#s" x="1428" y="300"/>
                    <use href="#s" x="1463" y="305"/>
                    <use href="#o" x="1100" y="420"/>
                    <use href="#s" x="1327" y="375"/>
                    <use href="#s" x="1344" y="427"/>
                    <use href="#o" x="1376" y="478"/>
                    <use href="#s" x="1108" y="486"/>
                    <use href="#s" x="1207" y="496"/>
                    <use href="#s" x="1203" y="546"/>
                    <use href="#s" x="1154" y="552"/>
                    <use href="#o" x="1170" y="605"/>
                    <use href="#s" x="1373" y="574"/>
                    <use href="#o" x="1352" y="638"/>
                    <use href="#s" x="1265" y="665"/>
                    <use href="#o" x="1465" y="668"/>
                    <use href="#s" x="950" y="570"/>
                    <use href="#s" x="653" y="514"/>
                    <use href="#s" x="680" y="540"/>
                    <use href="#s" x="678" y="580"/>
                    <use href="#s" x="808" y="692"/>
                    <use href="#s" x="1002" y="686"/>
                    <use href="#s" x="1008" y="746"/>
                    <use href="#s" x="1043" y="742"/>
                    <use href="#o" x="1085" y="720"/>
                    <use href="#s" x="1134" y="710"/>
                    <use href="#s" x="995" y="788"/>
                    <use href="#o" x="800" y="835"/>
                    <use href="#s" x="840" y="820"/>
                    <use href="#s" x="40" y="737"/>
                    <use href="#s" x="88" y="745"/>
                    <use href="#s" x="576" y="755"/>
                    <use href="#s" x="551" y="785"/>
                    <use href="#s" x="595" y="793"/>
                    <use href="#s" x="400" y="848"/>
                    <use href="#s" x="411" y="893"/>
                    <use href="#o" x="454" y="903"/>
                    <use href="#o" x="612" y="915"/>
                    <use href="#s" x="563" y="900"/>
                    <use href="#s" x="668" y="876"/>
                    <use href="#o" x="311" y="998"/>
                    <use href="#o" x="362" y="983"/>
                    <use href="#o" x="441" y="978"/>
                    <use href="#s" x="402" y="975"/>
                    <use href="#s" x="471" y="952"/>
                    <use href="#s" x="105" y="918"/>
                    <use href="#s" x="135" y="938"/>
                    <use href="#s" x="176" y="940"/>
                    <use href="#s" x="84" y="968"/>
                    <use href="#s" x="323" y="1058"/>
                    <use href="#s" x="362" y="1070"/>
                    <use href="#s" x="409" y="1108"/>
                    <use href="#s" x="435" y="1160"/>
                    <use href="#o" x="992" y="1028"/>
                    <use href="#s" x="922" y="1024"/>
                    <use href="#s" x="955" y="990"/>
                    <use href="#s" x="984" y="955"/>
                    <use href="#s" x="957" y="1048"/>
                    <use href="#s" x="1027" y="1035"/>
                    <use href="#o" x="1225" y="865"/>
                    <use href="#s" x="1199" y="820"/>
                    <use href="#s" x="1265" y="917"/>
                    <use href="#o" x="1318" y="940"/>
                    <use href="#s" x="1310" y="990"/>
                    <use href="#s" x="1338" y="890"/>
                    <use href="#s" x="1372" y="890"/>
                    <use href="#s" x="1475" y="738"/>
                    <use href="#s" x="1472" y="796"/>
                    <use href="#s" x="1507" y="792"/>
                    <use href="#s" x="1510" y="846"/>
                    <use href="#s" x="1517" y="993"/>
                    <use href="#o" x="1553" y="1022"/>
                    <use href="#s" x="1494" y="1028"/>
                </g>
            </svg>

            <div class="bubble bubble-date">30 septembre 2023</div>
            <div class="bubble bubble-notice">
                <svg class="broadcast" viewBox="0 0 24 16" width="22" height="15">
                    <circle cx="12" cy="8" r="2.200" fill="#54656f"/>
                    <path d="M6.500 3.500C4.500 6 4.500 10 6.500 12.500M17.500 3.500C19.500 6 19.500 10 17.500 12.500M2.800 1C-.200 5-.200 11 2.800 15M21.200 1C24.200 5 24.200 11 21.200 15" fill="none" stroke="#54656f" stroke-width="2.200"/>
                </svg>
                Pour cette chaîne, la confidentialité de votre profil et de votre numéro de téléphone est renforcée. Appuyez pour en savoir plus.
            </div>
            <div class="bubble bubble-created">La chaîne "Manage Moi" a été créée</div>

            <div class="pip">
                <div class="pip-window">
                    <svg class="pip-waves" viewBox="0 0 14 24" width="14" height="24">
                        <path d="M1 7C4 9 4 15 1 17M4 1C11 5 11 19 4 23" fill="none" stroke="#fff" stroke-width="3"/>
                    </svg>
                    <span class="pip-handle"></span>
                </div>
            </div>
        </main>
    </div>
</body>

</html>
```
FILE: styles.css
```css
body {
  margin: 0;
  font-family: Roboto, sans-serif;
}

.screen {
  width: 720px;
  height: 1611px;
  display: flex;
  flex-direction: column;
  overflow: hidden;
}

.top {
  background: #3d5564;
  color: #ffffff;
  height: 184px;
  flex-shrink: 0;
}

/* status bar */
.status-bar {
  height: 72px;
  box-sizing: border-box;
  padding: 2px 33px 0 32px;
  display: flex;
  align-items: center;
  justify-content: space-between;
}

.clock {
  font-size: 24px;
}

.status-icons {
  display: flex;
  align-items: center;
}

.status-bell {
  margin-right: 13px;
}

.network {
  display: flex;
  align-items: flex-end;
  margin-right: 7px;
}

.net-type {
  width: 18px;
  display: flex;
  flex-direction: column;
  line-height: 1;
}

.net-label {
  font-size: 15px;
  line-height: 13px;
}

.speed {
  width: 30px;
  display: flex;
  flex-direction: column;
  align-items: center;
  margin-right: 8px;
}

.speed-value {
  font-size: 14px;
  font-weight: 700;
  line-height: 13px;
}

.speed-unit {
  font-size: 10px;
  font-weight: 700;
  line-height: 10px;
}

.battery {
  display: flex;
  align-items: center;
}

.battery-nub {
  width: 3px;
  height: 10px;
  margin-right: 1px;
  background: #ffffff;
  border-radius: 2px 0 0 2px;
}

.battery-box {
  width: 41px;
  height: 22px;
  box-sizing: border-box;
  border: 2px solid #ffffff;
  border-radius: 4px;
  padding: 2px 1px 2px 7px;
  display: flex;
}

.battery-level {
  flex: 1;
  background: #7d8e99;
  font-size: 18px;
  line-height: 14px;
  padding-left: 1px;
}

/* channel bar */
.app-bar {
  height: 112px;
  padding-left: 17px;
  display: flex;
  align-items: center;
}

.back {
  flex-shrink: 0;
}

.avatar {
  width: 70px;
  height: 70px;
  margin-left: 8px;
  border-radius: 50%;
  background: #ffffff;
  display: flex;
  align-items: center;
  justify-content: center;
}

.logo-text {
  font-family: Roboto, sans-serif;
  font-size: 3.200px;
  font-weight: 700;
}

.channel {
  flex: 1;
  margin-left: 17px;
  margin-top: 4px;
  display: flex;
  flex-direction: column;
}

.channel-name {
  margin: 0;
  font-size: 36px;
  font-weight: 400;
  line-height: 44px;
}

.channel-count {
  color: #d5dcdf;
  font-size: 20px;
  line-height: 32px;
  letter-spacing: .5px;
}

.muted {
  margin-top: 4px;
  margin-right: 60px;
}

.more {
  margin-right: 40px;
  display: flex;
  flex-direction: column;
  gap: 4px;
}

.dot {
  width: 8px;
  height: 8px;
  border-radius: 50%;
  background: #ffffff;
}

/* chat area */
.chat {
  position: relative;
  flex: 1;
  background: #f0e8de;
  padding-top: 9px;
  display: flex;
  flex-direction: column;
  align-items: center;
}

.wallpaper {
  position: absolute;
  top: 0;
  left: 0;
}

.doodles {
  fill: none;
  stroke: #f6f0e9;
  stroke-width: 2.200;
  stroke-linejoin: round;
  stroke-linecap: round;
}

.doodles *,
.wallpaper defs * {
  vector-effect: non-scaling-stroke;
}

.wall-hi {
  font-family: Roboto, sans-serif;
  font-size: 127px;
  font-weight: 400;
}

.wall-clock {
  font-family: Roboto, sans-serif;
  font-size: 95px;
  font-weight: 300;
}

.bubble {
  position: relative;
  box-sizing: border-box;
  background: #f6f6f4;
  border-radius: 17px;
  box-shadow: 0 1px 2px rgba(0, 0, 0, .12);
  color: #54656f;
  font-size: 22px;
  line-height: 26px;
  padding: 14px 14px 10px;
  text-align: center;
}

.bubble-date {
  width: 227px;
  margin-bottom: 18px;
  font-weight: 500;
  white-space: nowrap;
}

.bubble-notice {
  width: 648px;
  margin-bottom: 24px;
}

.bubble-created {
  width: 381px;
  white-space: nowrap;
}

.broadcast {
  vertical-align: -1px;
}

/* floating video window */
.pip {
  position: absolute;
  top: 410px;
  left: -50px;
  width: 98px;
  height: 96px;
  border-radius: 50%;
  background: #f4f3f0;
  display: flex;
  align-items: center;
  justify-content: flex-end;
  box-shadow: 0 1px 3px rgba(0, 0, 0, .05);
}

.pip-window {
  position: relative;
  width: 76px;
  height: 74px;
  margin-right: 12px;
  background: #9fa1d6;
  border-radius: 14px;
}

.pip-waves {
  position: absolute;
  left: 36px;
  top: 24px;
}

.pip-handle {
  position: absolute;
  left: 50px;
  top: 44px;
  width: 3px;
  height: 3px;
  border-right: 3px solid #c9cae8;
  border-bottom: 3px solid #c9cae8;
}
```
